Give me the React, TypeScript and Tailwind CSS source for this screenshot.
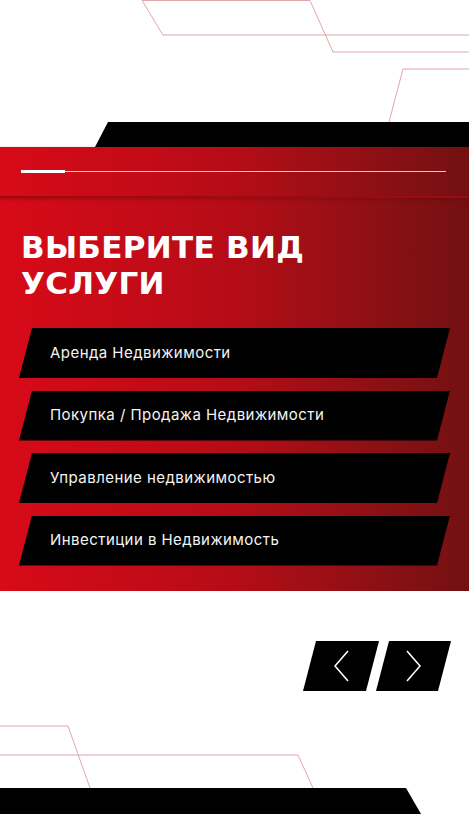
const services = [
  'Аренда Недвижимости',
  'Покупка / Продажа Недвижимости',
  'Управление недвижимостью',
  'Инвестиции в Недвижимость',
];

const slant = '[clip-path:polygon(13px_0,100%_0,calc(100%-13px)_100%,0_100%)]';

export default function App() {
  return (
    <div className="relative h-[814px] w-[469px] overflow-hidden bg-white font-['Inter',sans-serif]">
      {/* top decor */}
      <div className="relative h-[122px]">
        <svg className="absolute inset-0" width="469" height="122" fill="none" stroke="#e3a4ac" strokeWidth="1">
          <polyline points="142,0.5 310,0.5 333,52 469,52" />
          <polyline points="142,0.5 163,35 469,35" />
          <polyline points="389,122 403,69 469,69" />
        </svg>
      </div>
      <div className="h-[25px] bg-black [clip-path:polygon(108px_0,100%_0,100%_100%,95px_100%)]" />

      {/* red panel */}
      <section className="h-[444px] bg-gradient-to-r from-[#d80a18] via-[#b50c17] to-[#731012]">
        <div className="flex h-[51px] items-center border-b-2 border-[#9e0a12] px-[21px] shadow-[0_1px_3px_rgba(80,0,0,0.35)]">
          <div className="h-[3px] w-[44px] bg-white" />
          <div className="h-px w-[381px] bg-[#f2c4c4]" />
        </div>
        <h1 className="mt-[31px] pl-[21px] font-['DejaVu_Sans',sans-serif] text-[31px] font-bold leading-[36px] tracking-[0.3px] text-white">
          ВЫБЕРИТЕ ВИД
          <br />
          УСЛУГИ
        </h1>
        <ul className="mt-[27px] flex flex-col gap-[12.5px] pl-[19px]">
          {services.map((s) => (
            <li
              key={s}
              className={`flex h-[50px] w-[431px] items-center bg-black pl-[31px] text-[15px] tracking-[0.45px] text-[#f4f4f4] ${slant}`}
            >
              {s}
            </li>
          ))}
        </ul>
      </section>

      {/* slider nav */}
      <div className="relative h-[197px]">
        <div className="flex justify-end pr-[18px] pt-[50px]">
          <button className={`flex h-[50px] w-[76px] items-center justify-center bg-black ${slant}`}>
            <svg width="15" height="32" viewBox="0 0 15 32" fill="none" stroke="white" strokeWidth="1.6">
              <polyline points="14,1 1,16 14,31" />
            </svg>
          </button>
          <button className={`-ml-[3px] flex h-[50px] w-[75px] items-center justify-center bg-black ${slant}`}>
            <svg width="15" height="32" viewBox="0 0 15 32" fill="none" stroke="white" strokeWidth="1.6">
              <polyline points="1,1 14,16 1,31" />
            </svg>
          </button>
        </div>
        <svg className="absolute left-0 top-[130px]" width="469" height="67" fill="none" stroke="#e3a4ac" strokeWidth="1">
          <polyline points="0,5 68,5 90,67" />
          <polyline points="0,34 298,34 313,67" />
        </svg>
      </div>
      <div className="h-[26px] bg-black [clip-path:polygon(0_0,406px_0,421px_100%,0_100%)]" />
    </div>
  );
}
